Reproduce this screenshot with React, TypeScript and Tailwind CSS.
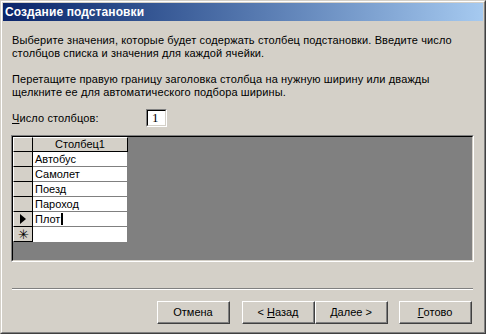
const rows = ['Автобус', 'Самолет', 'Поезд', 'Пароход', 'Плот', ''];

function Btn({ children }: { children: React.ReactNode }) {
  return (
    <div className="w-[73px] h-[23px] border border-t-white border-l-white border-r-[#404040] border-b-[#404040]">
      <div className="w-full h-full flex items-center justify-center border-r border-b border-[#808080] text-black">
        {children}
      </div>
    </div>
  );
}

export default function App() {
  return (
    <div
      className="w-[486px] h-[334px] bg-[#d4d0c8] text-[11px] leading-[13px] text-black border border-t-[#d4d0c8] border-l-[#d4d0c8] border-r-[#404040] border-b-[#404040]"
      style={{ fontFamily: '"Liberation Sans", Arial, sans-serif' }}
    >
      <div className="w-full h-full border border-t-white border-l-white border-r-[#808080] border-b-[#808080] p-[1px] flex flex-col">
        {/* title bar */}
        <div className="h-[18px] bg-gradient-to-r from-[#0a246a] to-[#a6caf0] flex items-center pl-[2px] text-white font-bold text-[12px] tracking-[0.1px]">
          Создание подстановки
        </div>

        <div className="flex flex-col px-[9px] pt-[13px]">
          <p className="tracking-[0.12px]">
            Выберите значения, которые будет содержать столбец подстановки. Введите число
            <br />
            столбцов списка и значения для каждой ячейки.
          </p>
          <p className="mt-[13px] tracking-[0.12px]">
            Перетащите правую границу заголовка столбца на нужную ширину или дважды
            <br />
            щелкните ее для автоматического подбора ширины.
          </p>

          <div className="flex items-center mt-[10px] h-[18px]">
            <span className="w-[134px] tracking-[0.12px]">
              <span className="underline">Ч</span>исло столбцов:
            </span>
            <div className="w-[21px] h-[18px] border border-t-[#808080] border-l-[#808080] border-r-white border-b-white">
              <div className="w-full h-full bg-white border border-t-black border-l-black border-r-[#d4d0c8] border-b-[#d4d0c8] pl-[4px] text-[13px] leading-[14px]" style={{ fontFamily: '"Liberation Serif", serif' }}>
                1
              </div>
            </div>
          </div>

          {/* datasheet */}
          <div className="mt-[8px] ml-[-1px] w-[463px] h-[127px] border border-t-[#808080] border-l-[#808080] border-r-white border-b-white">
            <div className="w-full h-full bg-[#808080] border border-t-black border-l-black border-r-[#d4d0c8] border-b-[#d4d0c8]">
              <div className="flex h-[15px]">
                <div className="w-[20px] bg-[#d4d0c8] border-r border-b border-black border-t border-t-white border-l border-l-white" />
                <div className="w-[95px] bg-[#d4d0c8] border-r border-b border-black border-t border-t-white text-center leading-[12px]">
                  Столбец1
                </div>
              </div>
              {rows.map((r, i) => (
                <div key={i} className="flex h-[15px]">
                  <div className="w-[20px] bg-[#d4d0c8] border-r border-b border-black border-l border-l-white flex items-center justify-center">
                    {i === 4 && (
                      <svg width="6" height="10" viewBox="0 0 6 10"><path d="M0 0 L6 5 L0 10 Z" fill="black" /></svg>
                    )}
                    {i === 5 && <span className="text-[13px] leading-[13px]">✳</span>}
                  </div>
                  <div className={`w-[95px] bg-white border-r border-[#808080] pl-[2px] flex items-center ${i < 5 ? 'border-b' : ''}`}>
                    {r}
                    {i === 4 && <span className="inline-block w-[2px] h-[12px] bg-black ml-[1px]" />}
                  </div>
                </div>
              ))}
            </div>
          </div>

          {/* separator */}
          <div className="mt-[26px] w-[461px] border-t border-t-[#808080] border-b border-b-white" />

          <div className="flex mt-[11px]">
            <div className="ml-[145px]">
              <Btn>Отмена</Btn>
            </div>
            <div className="ml-[12px] flex">
              <Btn>
                &lt; <span className="underline ml-[3px]">Н</span>азад
              </Btn>
              <Btn>
                <span className="underline">Д</span>алее &gt;
              </Btn>
            </div>
            <div className="ml-[11px]">
              <Btn>
                <span className="underline">Г</span>отово
              </Btn>
            </div>
          </div>
        </div>
      </div>
    </div>
  );
}
